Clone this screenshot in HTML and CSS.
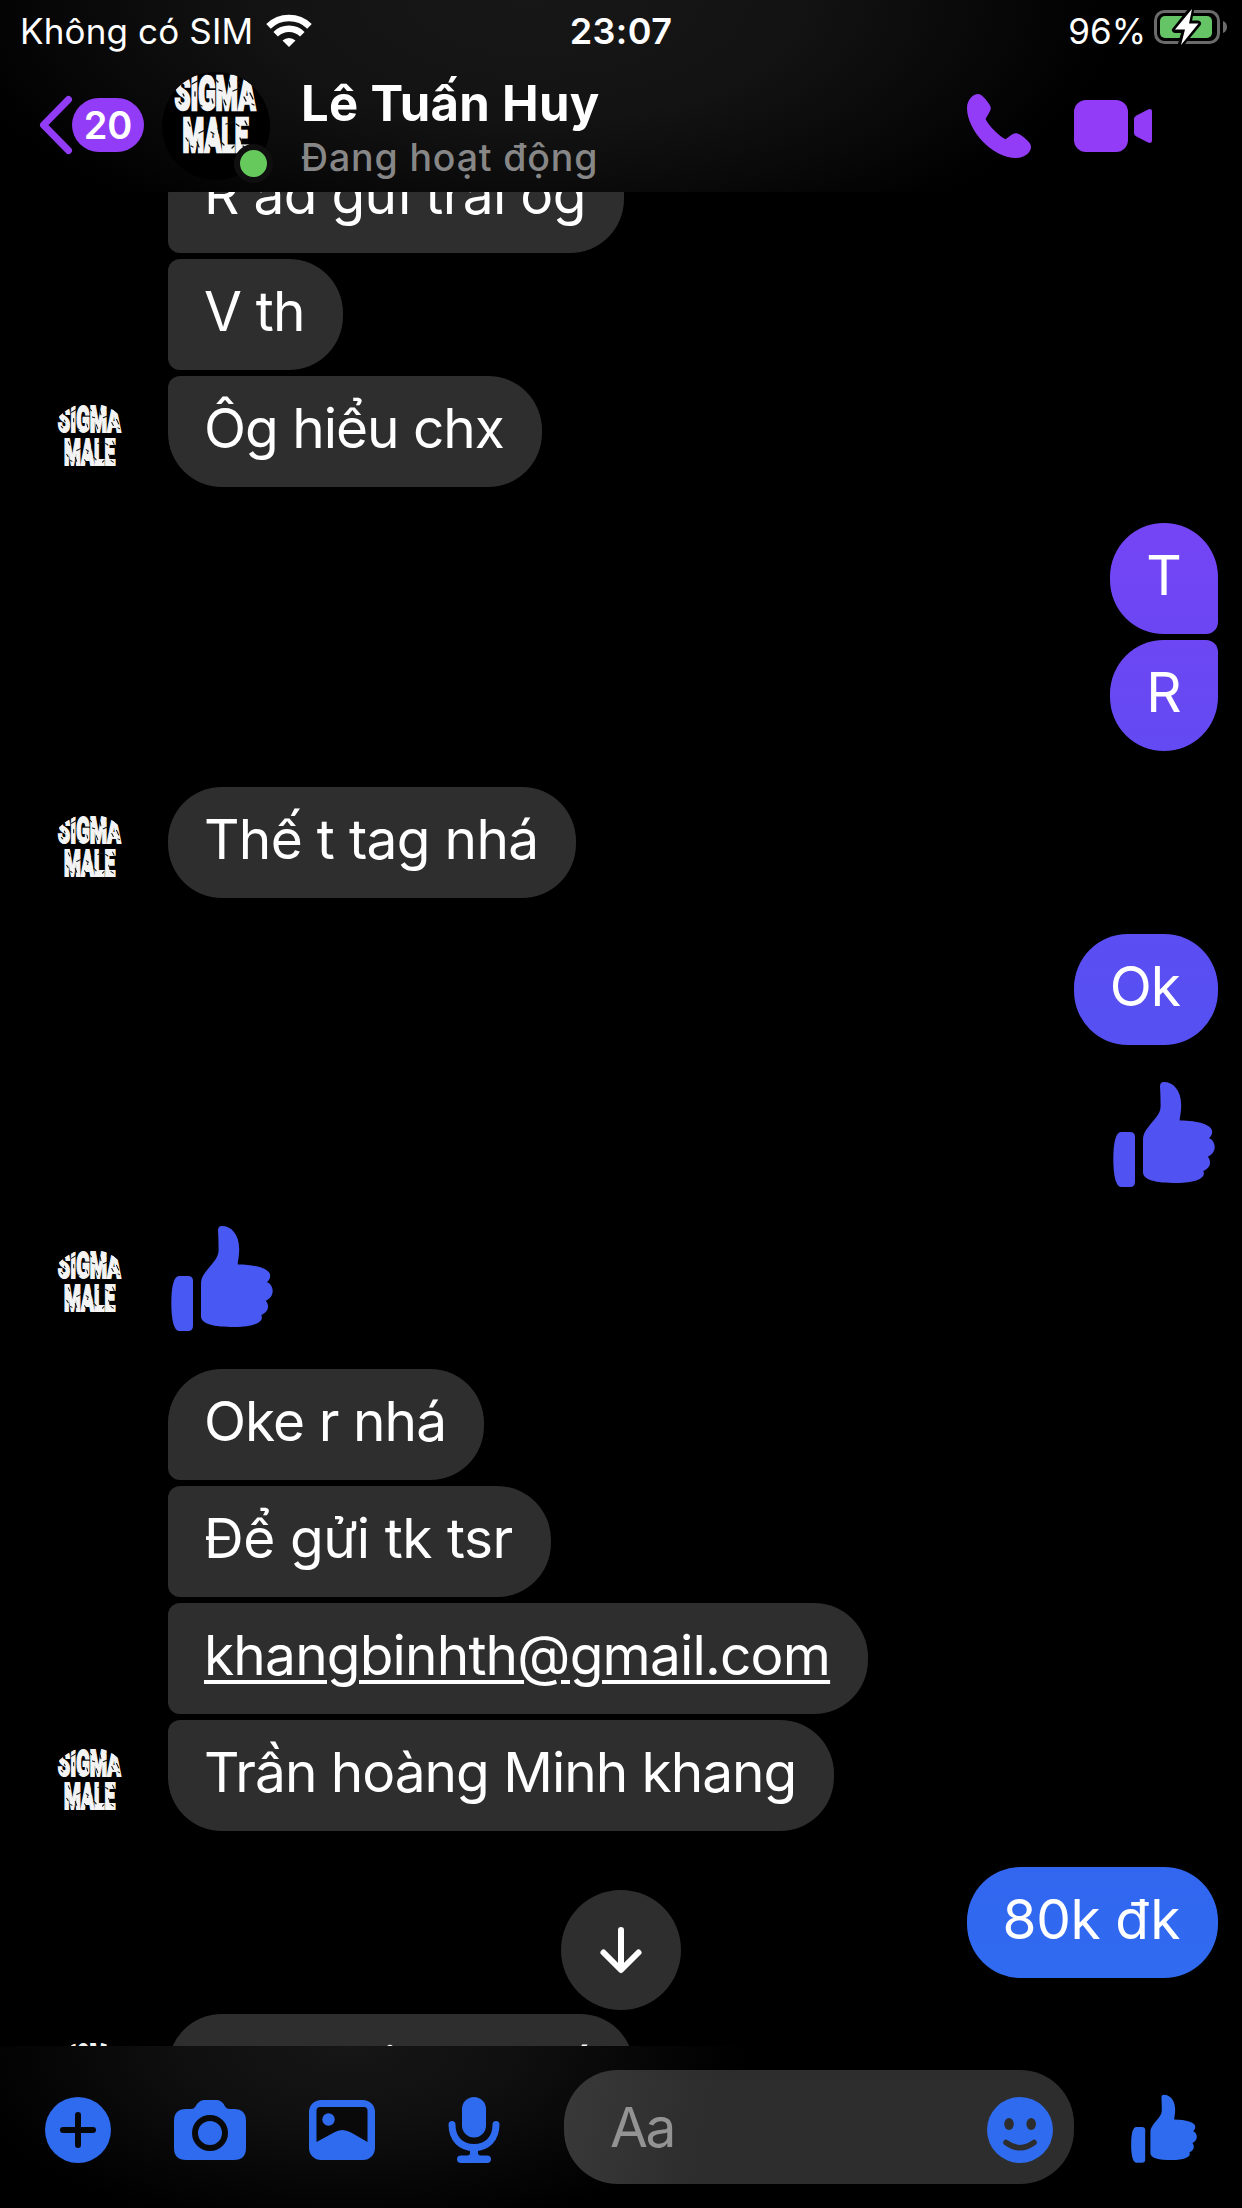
FILE: index.html
```html
<!DOCTYPE html>
<html lang="vi">
<head>
<meta charset="utf-8">
<title>Lê Tuấn Huy</title>
<link rel="stylesheet" href="styles.css">
</head>
<body>
<svg class="defs" aria-hidden="true">
  <defs>
    <clipPath id="round"><circle cx="54" cy="54" r="54"/></clipPath>
    <symbol id="avatar" viewBox="0 0 108 108">
      <g clip-path="url(#round)">
        <rect width="108" height="108" fill="#000"/>
        <g class="avatar-word">
          <text x="12.500" y="37.500" textLength="81" lengthAdjust="spacingAndGlyphs">SIGMA</text>
          <text x="20.500" y="79.500" textLength="66" lengthAdjust="spacingAndGlyphs">MALE</text>
        </g>
        <path class="grunge" d="M17 30l2 2M21 22l1 2M30 12l7-4M33 20v4M38 33l2 1M45 12l1 3M50 27l1 4M54 8l2 2M57 18l3 1M62 28l2 5M67 10l1 5M71 19l7-3M76 9l3 4M82 25l2 4M88 21l3 6M90 32l2 1M26 50l2 4M24 66l2 3M29 74l2 1M37 61l6-3M35 70l2 5M44 50l1 3M49 60l3 2M47 73l2 3M56 56l1 5M59 70l3 3M64 52l7-2M67 63l1 4M74 52l3 2M78 66l2 5M83 49l2 4M81 74l3 2M70 76l2-2"/>
      </g>
    </symbol>
    <symbol id="thumb" viewBox="0 0 108 108">
      <path d="M11 51h9q5 0 5 5v45q0 5-5 5h-9C6 106 3.300 95 3.300 78S6 51 11 51z"/>
      <path d="M50 5.500C50.500 14 50.600 18 50.600 25C50.600 34 43 39 36.500 48.500C34 52 33 55 33 59V91C33 99 45 102 67 102C83 102 97 98 93.300 90C98 88 100 85 100 81.500C100 79 99 77 97.700 75.700C102 74 104.700 70 104.700 66C104.700 62 102 58 99 57.300C101.500 55 102.200 53 102.200 50.500C102.200 44 88 39.500 70 39.500C69 39.500 71.200 33 71.200 24C71.200 9 63 1 54 1C51 1 50 3 50 5.500z"/>
    </symbol>
  </defs>
</svg>
<div class="screen">
  <header class="header">
    <div class="status">
      <div class="carrier"><span>Không có SIM</span>
        <svg class="wifi" viewBox="0 0 46 34"><path d="M23 34l-6.500-6.500a9.500 9.500 0 0 1 13 0z"/><path class="arc" d="M9.700 21.300a19 19 0 0 1 26.600 0M2.500 13.300a29.500 29.500 0 0 1 41 0"/></svg>
      </div>
      <span class="time">23:07</span>
      <div class="power"><span>96%</span>
        <svg class="battery" viewBox="0 0 74 38"><rect x="1.500" y="3.500" width="63" height="31" rx="9" fill="none" stroke="#6b6b6b" stroke-width="3"/><path d="M69 13c3 1 4 3.500 4 6s-1 5-4 6z" fill="#6b6b6b"/><rect x="6" y="8" width="52" height="22" rx="5" fill="#65c466"/><path d="M37 2L21 22H31L27 36L44 15.500H34.500z" fill="#fff" stroke="#000" stroke-width="6" stroke-linejoin="round"/><path d="M38 1L21 21.500H31L27 37L44.500 15.500H35z" fill="#fff"/></svg>
      </div>
    </div>
    <div class="bar">
      <svg class="back" viewBox="0 0 34 60"><path d="M29.500 4.500L4.500 30L29.500 55.500"/></svg>
      <span class="count">20</span>
      <div class="photo"><svg><use href="#avatar"/></svg><i class="online"></i></div>
      <div class="who"><div class="name">Lê Tuấn Huy</div><div class="active">Đang hoạt động</div></div>
      <svg class="call" viewBox="0 0 64 64"><path d="M0 14C0 6 6 0 11 0C14 0 17 3 21 8.500C24.500 13 24.500 15 22 19L18.500 25C22 32 32 42 38.500 45.300L45 40.500C48.500 38.500 51 39 55 42C61 46.500 64 49.500 64 53C64 58 58 64 49 64C25 64 0 36 0 14z"/></svg>
      <svg class="video" viewBox="0 0 78 52"><rect width="54" height="52" rx="12"/><path d="M60 19q0-2 2-3.300L74 9.500q4-1.500 4 2v29q0 3.500-4 2L62 36.300q-2-1-2-3.300z"/></svg>
    </div>
  </header>

  <main class="chat">
    <section class="group in">
      <div class="stack"><p class="bubble tail s-snug">R ad gửi trai ôg</p><p class="bubble head tail s-tight">V th</p><p class="bubble head s-tightest">Ôg hiểu chx</p></div>
      <svg class="face"><use href="#avatar"/></svg>
    </section>
    <section class="group out">
      <div class="stack"><p class="bubble tail single c1">T</p><p class="bubble head single c2">R</p></div>
    </section>
    <section class="group in">
      <div class="stack"><p class="bubble s-snug">Thế t tag nhá</p></div>
      <svg class="face"><use href="#avatar"/></svg>
    </section>
    <section class="group out">
      <div class="stack"><p class="bubble s-tightest c3">Ok</p></div>
    </section>
    <section class="group out"><svg class="like k1"><use href="#thumb"/></svg></section>
    <section class="group in">
      <svg class="like k2"><use href="#thumb"/></svg>
      <svg class="face"><use href="#avatar"/></svg>
    </section>
    <section class="group in">
      <div class="stack"><p class="bubble tail s-tighter">Oke r nhá</p><p class="bubble head tail s-loose">Để gửi tk tsr</p><p class="bubble head tail s-tight"><span class="link">khangbinhth@gmail.com</span></p><p class="bubble head s-tightest">Trần hoàng Minh khang</p></div>
      <svg class="face"><use href="#avatar"/></svg>
    </section>
    <section class="group out">
      <div class="stack"><p class="bubble s-loose c4">80k đk</p></div>
    </section>
    <section class="group in">
      <div class="stack"><p class="bubble s-last">Con xui km nhá</p></div>
      <svg class="face"><use href="#avatar"/></svg>
    </section>
    <button class="down" aria-label="Xuống cuối"><svg viewBox="0 0 48 50"><path d="M24 5V44M6.500 27.500L24 45L41.500 27.500"/></svg></button>
  </main>

  <footer class="composer">
    <svg class="plus" viewBox="0 0 66 66"><circle cx="33" cy="33" r="33"/><path d="M33 18V48M18 33H48" stroke="#070707" stroke-width="6" stroke-linecap="round"/></svg>
    <svg class="camera" viewBox="0 0 72 60"><path d="M12 9h5q3 0 4.500-2.500Q25 0 30 0h13q5 0 8 6.500Q52.500 9 56 9h4q12 0 12 12v27q0 12-12 12H12Q0 60 0 48V21Q0 9 12 9z"/><circle cx="36" cy="33" r="15" fill="none" stroke="#090909" stroke-width="6"/></svg>
    <svg class="gallery" viewBox="0 0 66 60"><rect width="66" height="60" rx="12"/><path d="M11 7H55Q58.500 7 58.500 10.500V42L42 32.500Q33 27.500 25 32.500L7.500 42V10.500Q7.500 7 11 7z" fill="#090909"/><circle cx="19.500" cy="19.500" r="6.200"/></svg>
    <svg class="mic" viewBox="0 0 52 66"><rect x="14" width="24" height="40.500" rx="12"/><path class="line" d="M4 27.500C4 42 13 50.500 26 50.500S48 42 48 27.500"/><path d="M22 52h8v4q0 2.500 3 2.500h6q4 0 4 3.700t-4 3.800H13q-4 0-4-3.800t4-3.700h6q3 0 3-2.500z"/></svg>
    <div class="field"><span class="hint">Aa</span>
      <svg class="smile" viewBox="0 0 66 66"><circle cx="33" cy="33" r="33"/><g fill="#2d2d2d"><ellipse cx="22" cy="27" rx="4.800" ry="6"/><ellipse cx="44.200" cy="27" rx="4.800" ry="6"/></g><path d="M19 45.500Q33 56 47 45.500" fill="none" stroke="#2d2d2d" stroke-width="5.500" stroke-linecap="round"/></svg>
    </div>
    <svg class="send"><use href="#thumb"/></svg>
  </footer>
</div>
</body>
</html>
```
FILE: styles.css
```css
* { box-sizing: border-box; }
body { margin: 0; background: #000; color: #fff; font-family: Inter, "Noto Sans", sans-serif; }
p { margin: 0; white-space: pre; }
svg { display: block; flex: none; }
.defs { position: absolute; width: 0; height: 0; }
.screen { display: flex; flex-direction: column; width: 1242px; height: 2208px; overflow: hidden; background: #000; }

.avatar-word { font: 900 48px Roboto, sans-serif; fill: #f4f4f4; stroke: #f4f4f4; stroke-width: 2.5; }
.grunge { stroke: #111; stroke-width: 1.3; stroke-linecap: round; fill: none; }

/* header */
.header { flex: none; height: 192px; background: radial-gradient(ellipse 590px 270px at 530px 0, #171717 0%, #131313 45%, #090909 75%, #000 100%); }
.status { display: grid; grid-template-columns: 1fr auto 1fr; height: 63px; padding: 0 20px; font-size: 35px; line-height: 63px; }
.carrier { display: flex; letter-spacing: 0.15px; }
.wifi { width: 46px; height: 34px; margin: 12.500px 0 0 13px; fill: #fff; }
.wifi .arc { fill: none; stroke: #fff; stroke-width: 6.500; }
.time { font-weight: 600; font-size: 36px; letter-spacing: 0.4px; }
.power { display: flex; justify-content: flex-end; margin-right: -6px; }
.battery { width: 74px; height: 38px; margin: 8px 0 0 8px; }
.bar { display: flex; align-items: center; height: 126px; padding: 0 90px 0 39px; fill: #933cf7; }
.back { width: 34px; height: 60px; margin-top: -2px; }
.back path { fill: none; stroke: #933cf7; stroke-width: 7; stroke-linecap: round; stroke-linejoin: round; }
.count { width: 72px; height: 54px; margin: -2px 0 0 -1px; border-radius: 27px; background: #933cf7; font: 600 38px/54px Inter, sans-serif; text-align: center; }
.photo { position: relative; width: 108px; height: 108px; margin-left: 18px; }
.photo svg { width: 108px; height: 108px; }
.online { position: absolute; right: -3px; bottom: -3px; width: 39px; height: 39px; border: 6px solid #0f0f0f; border-radius: 50%; background: #65c95c; }
.who { flex: 1; padding: 4px 0 0 31px; }
.name { font: 700 49px/60px Inter, sans-serif; letter-spacing: 0.3px; }
.active { color: #878787; font: 500 37.5px/48px Inter, sans-serif; letter-spacing: 0.85px; }
.call { width: 64px; height: 64px; margin-right: 43px; }
.video { width: 78px; height: 52px; }

/* conversation */
.chat { position: relative; flex: 1; min-height: 0; overflow: hidden; display: flex; flex-direction: column; gap: 36px; }
.chat .group:first-child { margin-top: -50px; }
.group { display: flex; flex: none; align-items: flex-end; padding: 0 24px 0 48px; }
.in { flex-direction: row-reverse; justify-content: flex-end; }
.in .face { margin-right: 36px; }
.out { justify-content: flex-end; }
.face { width: 84px; height: 84px; }
.stack { display: flex; flex-direction: column; align-items: flex-start; gap: 6px; }
.out .stack { align-items: flex-end; }
.bubble { height: 111px; padding: 0 38px 0 36px; border-radius: 54px; background: #2e2e2e; font-size: 55px; line-height: 104px; }
.single { width: 108px; padding: 0; text-align: center; }
.in .tail { border-bottom-left-radius: 12px; }
.in .head { border-top-left-radius: 12px; }
.out .tail { border-bottom-right-radius: 12px; }
.out .head { border-top-right-radius: 12px; }
.s-loose { letter-spacing: -0.45px; }
.s-snug { letter-spacing: -0.68px; }
.s-tight { letter-spacing: -0.82px; }
.s-tighter { letter-spacing: -0.95px; }
.s-tightest { letter-spacing: -1.03px; }
.s-last { letter-spacing: -0.75px; }
.bubble.c1 { background: linear-gradient(#7545f5, #6c46f3); }
.bubble.c2 { background: linear-gradient(#6c47f3, #634af2); }
.bubble.c3 { background: linear-gradient(#5b4ef3, #5550f2); }
.bubble.c4 { background: linear-gradient(#3266f0, #2f6bf0); }
.link { text-decoration: underline; text-decoration-thickness: 4px; text-underline-offset: 5px; }
.like { width: 108px; height: 108px; }
.k1 { fill: #5053f2; }
.k2 { fill: #4758f3; }
.down { position: absolute; left: 561px; top: 1698px; display: flex; align-items: center; justify-content: center; width: 120px; height: 120px; padding: 0; border: 0; border-radius: 50%; background: #2e2e2e; }
.down svg { width: 48px; height: 50px; fill: none; stroke: #fff; stroke-width: 6; stroke-linecap: round; stroke-linejoin: round; }

/* composer */
.composer { display: flex; flex: none; align-items: center; height: 162px; padding: 6px 43px 0 45px; fill: #2f6bee; background: radial-gradient(ellipse 400px 190px at 350px 0, #161616 0%, #101010 40%, #060606 75%, #000 100%); }
.plus { width: 66px; height: 66px; margin-right: 63px; }
.camera { width: 72px; height: 60px; margin-right: 63px; }
.gallery { width: 66px; height: 60px; margin-right: 73px; }
.mic { width: 52px; height: 66px; margin-right: 64px; }
.mic .line { fill: none; stroke: #2f6bee; stroke-width: 7; stroke-linecap: round; }
.field { display: flex; align-items: center; justify-content: space-between; width: 510px; height: 114px; margin-top: -6px; padding: 0 21px 0 46px; border-radius: 54px; background: linear-gradient(100deg, #393939, #2d2d2d 28%); }
.hint { color: #939393; font-size: 55px; line-height: 112px; letter-spacing: -2.5px; }
.smile { width: 66px; height: 66px; margin-top: 6px; }
.send { width: 70px; height: 70px; margin: -3px 0 0 auto; }
```
